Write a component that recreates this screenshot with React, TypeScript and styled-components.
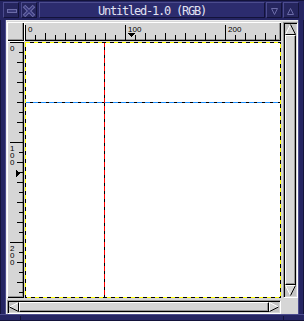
import React from "react";
import styled, { createGlobalStyle } from "styled-components";

const C = {
  frame: "#252562",
  frameDark: "#13133a",
  frameLight: "#4c4c8e",
  title: "#2c2c6e",
  btn: "#26265f",
  glyph: "#6c6ca8",
  text: "#e2e2f2",
  bg: "#d6d6d6",
  trough: "#c3c3c3",
  dark: "#969696",
};

const GlobalStyle = createGlobalStyle`
  html, body { margin: 0; padding: 0; background: ${C.frame}; }
  body { width: 304px; height: 321px; overflow: hidden; }
`;

const Window = styled.div`
  width: 304px;
  height: 321px;
  display: flex;
  flex-direction: column;
  background: ${C.frame};
`;

const TitleBar = styled.div`
  height: 20px;
  box-sizing: border-box;
  display: flex;
  align-items: flex-start;
  padding: 2px 5px 0 3px;
  border-top: 1px solid ${C.frameDark};
  padding-top: 1px;
`;

const ButtonGroup = styled.div<{ $gap: number }>`
  display: flex;
  gap: ${(p) => p.$gap}px;
`;

const TitleButton = styled.div`
  width: 16px;
  height: 16px;
  box-sizing: border-box;
  border: 1px solid;
  border-color: ${C.frameLight} ${C.frameDark} ${C.frameDark} ${C.frameLight};
  background: ${C.btn};
  svg { display: block; }
`;

const TitleArea = styled.div`
  flex: 1;
  height: 16px;
  margin: 0 1px 0 2px;
  box-sizing: border-box;
  border: 1px solid;
  border-color: ${C.frameLight} ${C.frameDark} ${C.frameDark} ${C.frameLight};
  background: ${C.title};
  color: ${C.text};
  font-family: "DejaVu Sans Mono", "Liberation Mono", monospace;
  font-size: 12px;
  letter-spacing: -1.22px;
  line-height: 13px;
  padding-top: 2px;
  text-align: center;
  white-space: nowrap;
  overflow: hidden;
`;

const Middle = styled.div`
  display: flex;
  height: 294px;
`;

const SideFrame = styled.div<{ $side: "left" | "right" }>`
  width: 6px;
  box-sizing: border-box;
  ${(p) =>
    p.$side === "left"
      ? `border-left: 1px solid ${C.frameDark}; border-right: 1px solid ${C.frameLight};`
      : `border-right: 1px solid ${C.frameDark}; border-left: 1px solid ${C.frameLight};`}
`;

const Client = styled.div`
  width: 292px;
  box-sizing: border-box;
  background: ${C.bg};
  border-left: 1px solid #eeeeee;
  border-top: 1px solid #eeeeee;
  padding-top: 1px;
  display: grid;
  grid-template-columns: 17px 257px 2px 15px;
  grid-template-rows: 19px 257px 2px 14px;
  grid-template-areas:
    "corner hruler . vscroll"
    "vruler canvas . vscroll"
    ". . . ."
    "hscroll hscroll . .";
`;

const BottomFrame = styled.div`
  height: 7px;
  box-sizing: border-box;
  display: flex;
  border-top: 1px solid ${C.frameLight};
  border-bottom: 1px solid ${C.frameDark};
`;

const FrameHandle = styled.div<{ $w: number; $edge: "left" | "right" }>`
  width: ${(p) => p.$w}px;
  box-sizing: border-box;
  margin-top: 1px;
  ${(p) => `border-${p.$edge}: 1px solid ${C.frameDark};`}
`;

const FrameFill = styled.div`
  flex: 1;
`;

const Raised = `
  box-shadow: inset 1px 1px #ffffff, inset -1px -1px #000000, inset -2px -2px ${C.dark};
`;

const Corner = styled.div`
  grid-area: corner;
  background: ${C.bg};
  ${Raised}
`;

const Ruler = styled.div<{ $area: string }>`
  grid-area: ${(p) => p.$area};
  background: ${C.bg};
  ${Raised}
  overflow: hidden;
  svg { display: block; }
  text {
    font-family: "Liberation Sans", Arial, sans-serif;
    font-size: 8px;
    fill: #000;
  }
`;

const CanvasCell = styled.div`
  grid-area: canvas;
  background: ${C.bg};
  padding: 1px 0 0 1px;
  box-sizing: border-box;
  overflow: hidden;
  svg { display: block; }
`;

const Trough = styled.div<{ $area: string; $dir: "row" | "column" }>`
  grid-area: ${(p) => p.$area};
  box-sizing: border-box;
  display: flex;
  flex-direction: ${(p) => p.$dir};
  background: ${C.trough};
  border: 1px solid;
  border-color: ${C.dark} #ffffff #ffffff ${C.dark};
  box-shadow: inset 1px 1px #000000, inset -1px -1px ${C.bg};
  padding: 1px;
`;

const Slider = styled.div`
  flex: 1;
  box-sizing: border-box;
  background: ${C.bg};
  border: 1px solid;
  border-color: #ffffff #000000 #000000 #ffffff;
  box-shadow: inset -1px -1px ${C.dark};
`;

const Stepper = styled.div<{ $size: number }>`
  width: ${(p) => p.$size}px;
  height: ${(p) => p.$size}px;
  flex: none;
  background: ${C.trough};
  svg { display: block; }
`;

type Dir = "up" | "down" | "left" | "right";

const Arrow: React.FC<{ dir: Dir; size: number }> = ({ dir, size }) => {
  const a = 0.5;
  const s = size - 0.5;
  const m = size / 2;
  let poly = "";
  let lit = "";
  let shade = "";
  if (dir === "up") {
    poly = `${a},${s} ${m},${a} ${s},${s}`;
    lit = `M${a} ${s} L${m} ${a}`;
    shade = `M${m} ${a} L${s} ${s} L${a} ${s}`;
  } else if (dir === "down") {
    poly = `${a},${a} ${s},${a} ${m},${s}`;
    lit = `M${m} ${s} L${a} ${a} L${s} ${a}`;
    shade = `M${s} ${a} L${m} ${s}`;
  } else if (dir === "left") {
    poly = `${a},${m} ${s},${a} ${s},${s}`;
    lit = `M${a} ${m} L${s} ${a}`;
    shade = `M${s} ${a} L${s} ${s} L${a} ${m}`;
  } else {
    poly = `${a},${a} ${s},${m} ${a},${s}`;
    lit = `M${a} ${s} L${a} ${a} L${s} ${m}`;
    shade = `M${s} ${m} L${a} ${s}`;
  }
  return (
    <svg width={size} height={size} viewBox={`0 0 ${size} ${size}`}>
      <polygon points={poly} fill={C.bg} />
      <path d={lit} stroke="#ffffff" strokeWidth={1} fill="none" />
      <path d={shade} stroke="#000000" strokeWidth={1} fill="none" />
    </svg>
  );
};

const ticks = Array.from({ length: 26 }, (_, k) => k * 10);

const HRuler: React.FC = () => (
  <Ruler $area="hruler">
    <svg width={257} height={19} shapeRendering="crispEdges">
      {ticks.map((v) => {
        const x = 1 + v + 0.5;
        const y1 = v % 100 === 0 ? 3 : v % 20 === 0 ? 11 : 13;
        return <line key={v} x1={x} x2={x} y1={y1} y2={18} stroke="#000" />;
      })}
      {[0, 100, 200].map((v) => (
        <text key={v} x={1 + v + 3} y={10}>
          {v}
        </text>
      ))}
      <polygon points="104,11 111,11 107.5,15" fill="#000" />
    </svg>
  </Ruler>
);

const VRuler: React.FC = () => (
  <Ruler $area="vruler">
    <svg width={17} height={257} shapeRendering="crispEdges">
      {ticks.map((v) => {
        const y = 1 + v + 0.5;
        const x1 = v % 100 === 0 ? 3 : v % 20 === 0 ? 10 : 12;
        return <line key={v} x1={x1} x2={16} y1={y} y2={y} stroke="#000" />;
      })}
      {[0, 100, 200].map((v) =>
        String(v)
          .split("")
          .map((d, i) => (
            <text key={`${v}-${i}`} x={3} y={1 + v + 9 + i * 7}>
              {d}
            </text>
          ))
      )}
      <polygon points="9,129 9,136 13.5,132.5" fill="#000" />
    </svg>
  </Ruler>
);

const Canvas: React.FC = () => (
  <CanvasCell>
    <svg width={256} height={256} shapeRendering="crispEdges">
      <rect width={256} height={256} fill="#ffffff" />
      <line x1={0} x2={256} y1={60.5} y2={60.5} stroke="#000" />
      <line x1={0} x2={256} y1={60.5} y2={60.5} stroke="#1e90ff" strokeDasharray="5 3" />
      <line x1={79.5} x2={79.5} y1={0} y2={256} stroke="#000" />
      <line x1={79.5} x2={79.5} y1={0} y2={256} stroke="#ff0000" strokeDasharray="5 3" />
      <rect x={0.5} y={0.5} width={255} height={255} fill="none" stroke="#000" />
      <rect
        x={0.5}
        y={0.5}
        width={255}
        height={255}
        fill="none"
        stroke="#ffff00"
        strokeDasharray="4 4"
      />
    </svg>
  </CanvasCell>
);

const App: React.FC = () => (
  <>
    <GlobalStyle />
    <Window>
      <TitleBar>
        <ButtonGroup $gap={2}>
          <TitleButton>
            <svg width={14} height={14}>
              <rect x={3.5} y={6.5} width={9} height={3} fill="#3a3a7a" stroke={C.glyph} />
            </svg>
          </TitleButton>
          <TitleButton>
            <svg width={14} height={14}>
              <path d="M2 3 L12 13 M12 3 L2 13" stroke={C.glyph} strokeWidth={3.6} />
              <path d="M2.6 3.6 L11.4 12.4 M11.4 3.6 L2.6 12.4" stroke="#34347a" strokeWidth={1.4} />
            </svg>
          </TitleButton>
        </ButtonGroup>
        <TitleArea>Untitled-1.0 (RGB)</TitleArea>
        <ButtonGroup $gap={1}>
          <TitleButton>
            <svg width={14} height={14}>
              <polygon points="4.5,5.5 10.5,5.5 7.5,11.5" fill="none" stroke={C.glyph} />
            </svg>
          </TitleButton>
          <TitleButton>
            <svg width={14} height={14}>
              <polygon points="3.5,11.5 9.5,11.5 6.5,5.5" fill="none" stroke={C.glyph} />
            </svg>
          </TitleButton>
        </ButtonGroup>
      </TitleBar>
      <Middle>
        <SideFrame $side="left" />
        <Client>
          <Corner />
          <HRuler />
          <VRuler />
          <Canvas />
          <Trough $area="vscroll" $dir="column">
            <Stepper $size={11}>
              <Arrow dir="up" size={11} />
            </Stepper>
            <Slider />
            <Stepper $size={11}>
              <Arrow dir="down" size={11} />
            </Stepper>
          </Trough>
          <Trough $area="hscroll" $dir="row">
            <Stepper $size={10}>
              <Arrow dir="left" size={10} />
            </Stepper>
            <Slider />
            <Stepper $size={10}>
              <Arrow dir="right" size={10} />
            </Stepper>
          </Trough>
        </Client>
        <SideFrame $side="right" />
      </Middle>
      <BottomFrame>
        <FrameHandle $w={21} $edge="right" />
        <FrameFill />
        <FrameHandle $w={21} $edge="left" />
      </BottomFrame>
    </Window>
  </>
);

export default App;
